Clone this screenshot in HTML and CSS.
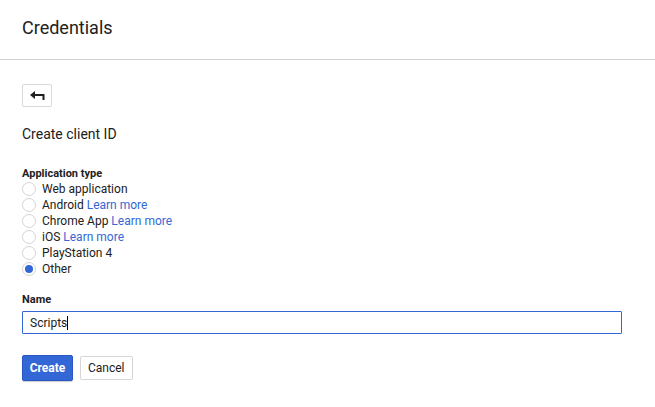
FILE: index.html
```html
<!DOCTYPE html>
<html>
<head>
<meta charset="utf-8">
<link rel="stylesheet" href="styles.css">
</head>
<body>
<header class="top">
  <h1 class="title">Credentials</h1>
</header>
<main class="content">
  <button class="back" type="button" aria-label="Back">
    <svg width="15" height="9" viewBox="0 0 15 9"><polygon points="0,4 5,0 5,8" fill="#202020"/><rect x="4" y="3" width="10" height="2" fill="#202020"/><rect x="12.5" y="3" width="2" height="6" fill="#202020"/></svg>
  </button>
  <h2 class="subtitle">Create client ID</h2>
  <div class="field">
    <div class="label">Application type</div>
    <label class="radio"><span class="dot"></span>Web application</label>
    <label class="radio"><span class="dot"></span>Android&nbsp;<a class="link">Learn more</a></label>
    <label class="radio"><span class="dot"></span>Chrome App&nbsp;<a class="link">Learn more</a></label>
    <label class="radio"><span class="dot"></span>iOS&nbsp;<a class="link">Learn more</a></label>
    <label class="radio"><span class="dot"></span>PlayStation 4</label>
    <label class="radio"><span class="dot on"></span>Other</label>
  </div>
  <div class="field name-field">
    <div class="label">Name</div>
    <div class="input"><span>Scripts</span><span class="caret"></span></div>
  </div>
  <div class="actions">
    <button class="btn primary" type="button">Create</button>
    <button class="btn" type="button">Cancel</button>
  </div>
</main>
</body>
</html>
```
FILE: styles.css
```css
* { box-sizing: border-box; }
html, body { margin: 0; padding: 0; background: #fff; }
body { font-family: Roboto, "Liberation Sans", Arial, sans-serif; color: #212121; width: 655px; height: 407px; overflow: hidden; }
.top { height: 60px; border-bottom: 1px solid #cfcfcf; padding: 0 22px; display: flex; align-items: center; }
.title { margin: 0; font-size: 18px; font-weight: 400; color: #212121; position: relative; top: -2px; }
.content { padding: 24px 22px 0 22px; display: flex; flex-direction: column; align-items: flex-start; }
.back { width: 30px; height: 23px; border: 1px solid #d9d9d9; border-radius: 2px; background: #fff; padding: 0; display: flex; align-items: center; justify-content: center; }
.subtitle { margin: 19px 0 0 0; font-size: 14px; font-weight: 400; line-height: 16px; }
.field { margin-top: 25px; display: flex; flex-direction: column; }
.label { font-size: 11px; font-weight: 700; line-height: 14px; color: #212121; }
.radio { display: flex; align-items: center; font-size: 12px; line-height: 16px; height: 16px; }
.dot { width: 14px; height: 14px; border: 1px solid #d4d4d4; border-radius: 50%; margin-right: 6px; display: inline-flex; align-items: center; justify-content: center; background: #fff; }
.dot.on::after { content: ""; width: 8px; height: 8px; border-radius: 50%; background: #3367d6; }
.link { color: #3367d6; }
.name-field { margin-top: 16px; }
.name-field .label { margin-bottom: 4px; }
.input { width: 600px; height: 23px; border: 1px solid #3367d6; border-radius: 1px; display: flex; align-items: center; padding-left: 7px; font-size: 12px; }
.caret { width: 1px; height: 14px; background: #000; }
.actions { display: flex; gap: 7px; align-items: center; margin-top: 21px; }
.btn { font-family: Roboto, "Liberation Sans", Arial, sans-serif; font-size: 12px; height: 24px; padding: 0 7px; border: 1px solid #d6d6d6; border-radius: 2px; background: #fff; color: #212121; }
.primary { height: 26px; width: 51px; padding: 0; background: #3367d6; border-color: #2a56c6; color: #fff; font-weight: 700; box-shadow: 0 1px 1px rgba(0,0,0,0.2); }
```
